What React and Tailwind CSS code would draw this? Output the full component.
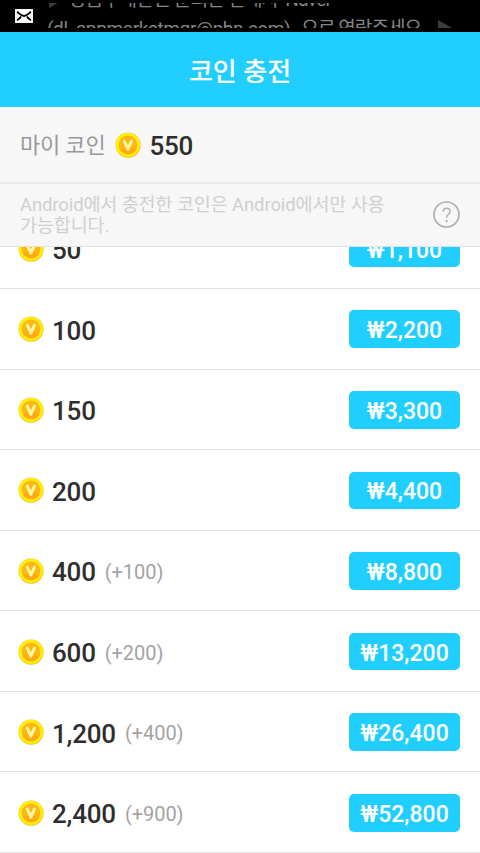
const packs = [
  { coins: '50', price: '1,100' },
  { coins: '100', price: '2,200' },
  { coins: '150', price: '3,300' },
  { coins: '200', price: '4,400' },
  { coins: '400', bonus: '(+100)', price: '8,800' },
  { coins: '600', bonus: '(+200)', price: '13,200' },
  { coins: '1,200', bonus: '(+400)', price: '26,400' },
  { coins: '2,400', bonus: '(+900)', price: '52,800' },
];

function Coin() {
  return (
    <svg className="size-[26px] shrink-0" viewBox="0 0 26 26">
      <circle cx="13" cy="13.1" r="12.8" fill="#e2d9b8" />
      <circle cx="13.2" cy="13.3" r="12.2" fill="#ffc800" />
      <circle cx="12.9" cy="12.8" r="12.1" fill="#fff000" />
      <circle cx="13" cy="13" r="9.4" fill="#ffb612" />
      <path d="M5.5 17.5a9.4 9.4 0 0 0 15.5 0.5L13.5 14z" fill="#ffa90f" />
      <path d="M9.3 9.2l3.600 7.900 3.600-7.900" fill="none" stroke="#fff89c" strokeWidth="3.1" strokeLinecap="round" strokeLinejoin="round" />
    </svg>
  );
}

function StatusBar() {
  return (
    <div className="h-8 shrink-0 bg-black pt-[3px] flex items-start">
      <svg className="ml-[15px] mt-[6px] w-[18px] h-[14px] shrink-0" viewBox="0 0 18 14">
        <rect width="18" height="14" fill="#fff" />
        <path d="M2 2.700C4.500 4 5.500 7 9 7s4.500-3 7-4.300M2 11.300C3.500 10.500 5 9.500 6 7.500M16 11.300C14.500 10.500 13 9.500 12 7.500" fill="none" stroke="#000" strokeWidth="1.800" />
      </svg>
      <div className="ml-[14px] h-[25px] w-[420px] overflow-hidden whitespace-nowrap text-[#858585] text-[19px] leading-[28px]">
        <div className="-mt-[17px] h-[28px] flex">
          <svg className="ml-[2px] mt-[8px] w-[12px] h-[14px] shrink-0" viewBox="0 0 12 14">
            <path d="M0 0l12 7L0 14z" fill="#3c3c3c" />
          </svg>
          <span className="ml-[8px] tracking-[-0.68px]">상품구매관련 문의는 판매자 'Naver'</span>
        </div>
        <div className="h-[28px] flex mt-px">
          <span className="tracking-[-0.38px]">(dl_appmarketmgr@nbn.com)</span>
          <span className="ml-[11px] tracking-[-0.9px]">으로 연락주세요.</span>
          <svg className="ml-[13px] mt-[5px] w-[14px] h-[16px] shrink-0" viewBox="0 0 14 16">
            <path d="M0 0l14 8L0 16z" fill="#3c3c3c" />
          </svg>
        </div>
      </div>
    </div>
  );
}

function PackRow({ coins, bonus, price }) {
  return (
    <div className="h-[80.6px] shrink-0 flex items-center border-b border-[#e3e3e3] pt-[1px] pl-[18px] pr-5">
      <Coin />
      <span className="ml-[8px] mt-[3px] text-[26px] leading-[30px] tracking-[-0.2px] font-medium text-[#2e2e2e]">{coins}</span>
      {bonus && <span className="ml-[9px] mt-[2px] text-[20px] leading-[26px] tracking-[-0.05px] text-[#a3a3a3]">{bonus}</span>}
      <button className="ml-auto h-[37.500px] w-[111px] rounded-[5px] bg-[#20cfff] text-[23px] leading-[30px] pt-[4px] text-white font-medium whitespace-nowrap">
        ₩{price}
      </button>
    </div>
  );
}

export default function App() {
  return (
    <div className="w-full h-screen overflow-hidden flex flex-col bg-white font-[Roboto,'Noto_Sans_CJK_KR',sans-serif]">
      <StatusBar />
      <header className="h-[74.500px] shrink-0 bg-[#20cfff] flex items-center justify-center">
        <h1 className="mt-[5px] text-[26px] leading-[36px] font-medium text-white">코인 충전</h1>
      </header>
      <section className="h-[77px] shrink-0 bg-[#f7f7f7] border-b-2 border-[#ebebeb] flex items-center pl-5">
        <span className="mt-[4px] text-[22px] leading-[30px] tracking-[-0.2px] text-[#999]">마이 코인</span>
        <span className="ml-[10px] mt-[1px] flex"><Coin /></span>
        <span className="ml-[8px] mt-[3px] text-[26px] leading-[30px] tracking-[-0.2px] font-medium text-[#2e2e2e]">550</span>
      </section>
      <section className="h-[63px] shrink-0 bg-[#f7f7f7] border-b border-[#e3e3e3] flex items-center justify-between pl-5 pr-5">
        <p className="mt-[3px] text-[18.500px] leading-[21px] tracking-[-0.12px] text-[#cfcfcf] whitespace-nowrap">
          Android에서 충전한 코인은 Android에서만 사용
          <br />
          가능합니다.
        </p>
        <svg className="size-[27px] shrink-0" viewBox="0 0 27 27" fill="none" stroke="#b0b0b0">
          <circle cx="13.500" cy="13.500" r="12.500" strokeWidth="1.700" />
          <path d="M10.100 10.700C10.100 8.500 11.600 7.300 13.600 7.300c2 0 3.400 1.200 3.400 3.100 0 1.300-.7 2.100-1.700 3.100-1.200 1.100-1.700 1.600-1.700 3.300" strokeWidth="1.500" />
          <path d="M13.600 18.900v2" strokeWidth="1.900" />
        </svg>
      </section>
      <main className="flex-1 min-h-0 overflow-hidden flex flex-col">
        <div className="-mt-[38.200px] flex flex-col">
          {packs.map((pack) => (
            <PackRow key={pack.coins} {...pack} />
          ))}
        </div>
      </main>
    </div>
  );
}
